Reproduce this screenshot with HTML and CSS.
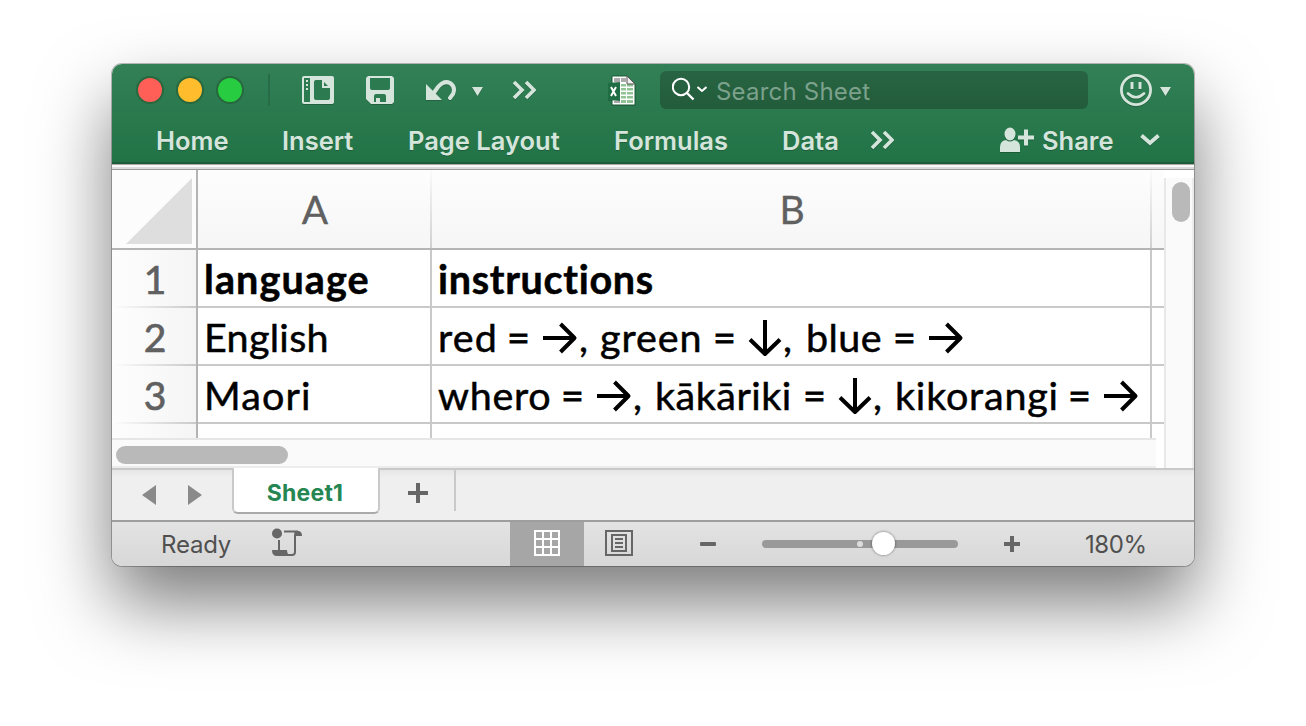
FILE: index.html
```html
<!DOCTYPE html>
<html lang="en">
<head>
<meta charset="utf-8">
<title>Sheet1</title>
<link rel="stylesheet" href="styles.css">
</head>
<body>
<svg width="0" height="0" class="defs">
  <defs>
    <symbol id="right" viewBox="0 0 36 36"><path d="M1 18H33M18.500 4L32.500 18L18.500 32" fill="none" stroke="#000" stroke-width="4" stroke-linejoin="round"/></symbol>
    <symbol id="down" viewBox="0 0 34 38"><path d="M17 1V35M2 20.500L17 35L32 20.500" fill="none" stroke="#000" stroke-width="4" stroke-linejoin="round"/></symbol>
    <symbol id="more" viewBox="0 0 24 20"><path d="M2 2L10 10L2 18M14 2L22 10L14 18" fill="none" stroke="#d5e5dc" stroke-width="3.600"/></symbol>
    <symbol id="tri" viewBox="0 0 11 9"><path d="M0 0H11L5.5 9Z" fill="#d5e5dc"/></symbol>
  </defs>
</svg>
<main class="window">
  <header class="ribbon">
    <div class="titlebar">
      <div class="lights"><i class="light close"></i><i class="light minimise"></i><i class="light grow"></i></div>
      <i class="sep"></i>
      <svg class="ic book" width="32" height="28" viewBox="0 0 32 28"><rect width="32" height="28" rx="2" fill="#d5e5dc"/><path d="M2 2H8V26H2ZM14 4H20V12H28V22Q28 24 26 24H14Q12 24 12 22V6Q12 4 14 4Z" fill="#2c7a4f"/><path d="M20 4L28 12H20Z" fill="#d5e5dc"/><path d="M22 6V10H26Z" fill="#2c7a4f"/><path d="M4 4h2v2H4zM4 8h2v2H4zM4 12h2v2H4z" fill="#d5e5dc"/></svg>
      <svg class="ic save" width="28" height="28" viewBox="0 0 28 28"><path d="M2 0H26L28 2V26L26 28H5L0 23V2Z" fill="#d5e5dc"/><path d="M4 2H24V12Q24 14 22 14H6Q4 14 4 12ZM10 18H18Q20 18 20 20V26H14V22H10V26H8V20Q8 18 10 18Z" fill="#2c7a4f"/></svg>
      <svg class="ic undo" width="32" height="22" viewBox="0 0 32 22"><path d="M1 4V20H17Z" fill="#d5e5dc"/><path d="M8 14L13 7Q19 0 25 3Q31 7 28 14L25 18" fill="none" stroke="#d5e5dc" stroke-width="4" stroke-linecap="round"/></svg>
      <svg class="ic tri1" width="11" height="9"><use href="#tri"/></svg>
      <svg class="ic more1" width="24" height="20"><use href="#more"/></svg>
      <svg class="ic excel" width="30" height="30" viewBox="0 0 30 30"><path d="M5 1H20L28 9V30H5Z" fill="#fff" stroke="#1d5d39" stroke-width="1"/><path d="M7 3H13V7H7ZM14 3H19V7H14ZM7 26H13V28H7Z" fill="#aaa"/><path d="M14 9H19V11.500H14ZM20 9H26V11.500H20ZM14 13H19V15.500H14ZM20 13H26V15.500H20ZM14 17H19V19.500H14ZM20 17H26V19.500H20ZM14 21H19V23.500H14ZM20 21H26V23.500H20ZM14 25H19V28H14ZM20 25H26V28H20Z" fill="#91c495"/><path d="M20 1V9H28Z" fill="#eee" stroke="#555" stroke-width="1"/><path d="M1 8L13 7V26L1 25Z" fill="#1f6e43"/><path d="M4 12L9 21M9 12L4 21" stroke="#fff" stroke-width="2"/></svg>
      <div class="search">
        <svg width="38" height="24" viewBox="0 0 38 24"><circle cx="9" cy="10" r="8.2" fill="none" stroke="#fff" stroke-width="2"/><path d="M15 16L21.5 22.5" stroke="#fff" stroke-width="2.4"/><path d="M25.500 10L30 14L34.500 10" fill="none" stroke="#fff" stroke-width="2"/></svg>
        <span>Search Sheet</span>
      </div>
      <svg class="ic smile" width="32" height="32" viewBox="0 0 32 32"><circle cx="16" cy="16" r="14.600" fill="none" stroke="#d5e5dc" stroke-width="2.800"/><path d="M12 8V15M20 8V15" stroke="#d5e5dc" stroke-width="3"/><path d="M8 19.500Q16 27 24 19.500" fill="none" stroke="#d5e5dc" stroke-width="2.600" stroke-linecap="round"/></svg>
      <svg class="ic tri2" width="11" height="9"><use href="#tri"/></svg>
    </div>
    <nav class="tabs">
      <span class="t-home">Home</span><span class="t-insert">Insert</span><span class="t-layout">Page Layout</span><span class="t-formulas">Formulas</span><span class="t-data">Data</span>
      <svg class="ic more2" width="24" height="20"><use href="#more"/></svg>
      <svg class="ic person" width="35" height="26" viewBox="0 0 35 26"><ellipse cx="10" cy="7" rx="5.500" ry="6.500" fill="#d5e5dc"/><path d="M0 25V20Q0 14 6 13Q10 16 14 13Q20 14 20 20V25Z" fill="#d5e5dc"/><path d="M18 10.500H34M26 2.500V18.500" stroke="#d5e5dc" stroke-width="4"/></svg>
      <span class="t-share">Share</span>
      <svg class="ic fold" width="20" height="12" viewBox="0 0 20 12"><path d="M1.500 1.500L10 9L18.500 1.500" fill="none" stroke="#d5e5dc" stroke-width="3.800"/></svg>
    </nav>
  </header>
  <div class="seam"></div>
  <section class="body">
    <div class="left">
      <div class="grid">
        <div class="corner"><svg width="66" height="66"><path d="M66 0V66H0Z" fill="#dedede"/></svg></div>
        <div class="col">A</div><div class="col">B</div><div class="col end"></div>
        <div class="num">1</div><div class="cell"><b class="w-lang">language</b></div><div class="cell"><b class="w-inst">instructions</b></div><div class="cell"></div>
        <div class="num">2</div><div class="cell"><span class="w-eng">English</span></div>
        <div class="cell"><span class="w-red">red</span><span class="w-eq">=</span><svg class="right" width="36" height="36"><use href="#right"/></svg><span class="w-comma">,</span><span class="w-green">green</span><span class="w-eq">=</span><svg class="down" width="34" height="38"><use href="#down"/></svg><span class="w-comma">,</span><span class="w-blue">blue</span><span class="w-eq">=</span><svg class="right" width="36" height="36"><use href="#right"/></svg></div><div class="cell"></div>
        <div class="num">3</div><div class="cell"><span class="w-maori">Maori</span></div>
        <div class="cell"><span class="w-whero">whero</span><span class="w-eq">=</span><svg class="right" width="36" height="36"><use href="#right"/></svg><span class="w-comma">,</span><span class="w-kak">kākāriki</span><span class="w-eq">=</span><svg class="down" width="34" height="38"><use href="#down"/></svg><span class="w-comma">,</span><span class="w-kik">kikorangi</span><span class="w-eq">=</span><svg class="right" width="36" height="36"><use href="#right"/></svg></div><div class="cell"></div>
        <div class="num last"></div><div class="cell last"></div><div class="cell last"></div><div class="cell last"></div>
      </div>
      <div class="hscroll"><i class="hthumb"></i></div>
    </div>
    <div class="vscroll"><i class="vthumb"></i></div>
  </section>
  <section class="sheets">
    <svg class="arrows" width="62" height="22" viewBox="0 0 62 22"><path d="M14 1V21L0 11ZM46 1V21L60 11Z" fill="#8a8a8a"/></svg>
    <div class="sheet"><span>Sheet1</span></div>
    <svg class="add" width="20" height="20"><path d="M0 10H20M10 0V20" stroke="#666" stroke-width="4"/></svg>
    <i class="sep2"></i>
  </section>
  <footer class="status">
    <span class="ready">Ready</span>
    <svg class="script" width="30" height="29" viewBox="0 0 30 29"><circle cx="5" cy="5.500" r="5" fill="#666"/><path d="M7 12V23" stroke="#666" stroke-width="2"/><path d="M12 3.500H26Q23 4 23 8V24Q23 27 20 27H16" fill="none" stroke="#666" stroke-width="2"/><path d="M22 3H26Q30 3 30 8H24Z" fill="#666"/><path d="M0 22H15Q15 27 19 28H5Q0 28 0 22Z" fill="#666"/></svg>
    <div class="view on"><svg width="26" height="26" viewBox="0 0 26 26"><path d="M1 1H25V25H1ZM9 1V25M17 1V25M1 9H25M1 17H25" fill="none" stroke="#fff" stroke-width="2"/></svg></div>
    <svg class="page" width="28" height="26" viewBox="0 0 28 26"><path d="M1 1H27V25H1ZM7 5H21V21H7ZM10 9H18M10 13H18M10 17H18" fill="none" stroke="#666" stroke-width="2"/></svg>
    <svg class="minus" width="16" height="4"><rect width="16" height="4" rx="1" fill="#666"/></svg>
    <div class="slider"><i class="tick"></i><i class="knob"></i></div>
    <svg class="plus" width="16" height="16"><path d="M0 8H16M8 0V16" stroke="#666" stroke-width="4"/></svg>
    <span class="pct">180%</span>
  </footer>
</main>
</body>
</html>
```
FILE: styles.css
```css
* { box-sizing: border-box; }
body { margin: 0; width: 1306px; height: 726px; padding: 64px 112px; background: #fff; overflow: hidden; font-family: Inter, sans-serif; }
.defs { position: absolute; }
i { display: block; }
svg { flex: none; display: block; }
.window { width: 1082px; height: 502px; border-radius: 10px; overflow: hidden; display: flex; flex-direction: column; box-shadow: 0 0 0 1px rgba(0,0,0,.25), 0 37px 72px rgba(0,0,0,.52); background: #fff; }

.ribbon { height: 100px; background: linear-gradient(#338056, #217346); border-bottom: 2px solid #1d5c38; color: #d5e5dc; flex: none; }
.ic { filter: drop-shadow(0 1px 0 rgba(0,0,0,.2)); }
.titlebar { height: 52px; display: flex; align-items: center; padding-left: 26px; }
.lights { display: flex; gap: 16px; }
.light { width: 24px; height: 24px; border-radius: 50%; box-shadow: 0 0 0 2px #28683f; }
.close { background: #ff5f57; }
.minimise { background: #ffbd2e; }
.grow { background: #28cc40; }
.sep { width: 2px; height: 32px; margin-left: 26px; background: #286c47; }
.book { margin-left: 32px; }
.save { margin-left: 32px; }
.undo { margin: 2px 0 0 31px; }
.tri1 { margin-left: 15px; margin-top: 2px; }
.more1 { margin-left: 29px; }
.excel { margin-left: 71px; }
.search { width: 428px; height: 38px; margin-left: 23px; border-radius: 6px; background: linear-gradient(#286443, #225c3a); display: flex; align-items: center; padding-left: 12px; color: #7ca18c; font-size: 24px; letter-spacing: .2px; }
.search span { margin-left: 6px; margin-top: 2px; }
.search svg { margin-top: -2px; }
.smile { margin-left: 32px; }
.tri2 { margin-left: 8px; margin-top: 2px; }

.tabs { height: 46px; display: flex; align-items: center; padding: 2px 0 0 44px; font-size: 25.5px; font-weight: 600; white-space: nowrap; text-shadow: 0 1px 0 rgba(0,0,0,.2); }
.tabs span { padding-top: 1px; }
.t-home, .t-insert { width: 126px; }
.t-layout { width: 206px; }
.t-formulas { width: 168px; }
.t-data { width: 88px; }
.person { margin-left: 106px; margin-top: -1px; }
.t-share { width: 105px; padding-left: 7px; margin-top: -1px; }

.seam { height: 6px; flex: none; background: linear-gradient(#a8a8a8 0 1px, #f8f8f8 1px 3px, #dcdcdc 3px 5px, #999 5px); }
.body { height: 298px; flex: none; display: flex; }
.left { width: 1052px; }
.grid { height: 268px; display: grid; grid-template-columns: 86px 234px 720px 12px; grid-template-rows: 80px 58px 58px 58px 14px; }
.corner { border-right: 2px solid #b4b4b4; border-bottom: 2px solid #b4b4b4; padding: 8px 0 0 14px; background: #fcfcfc; }
.col { font: 39px Lato, sans-serif; color: #606060; display: flex; align-items: center; justify-content: center; border-bottom: 2px solid #b4b4b4; background: linear-gradient(#fafafa, #d0d0d0) right / 2px 100% no-repeat, linear-gradient(#fdfdfd, #f6f6f6); -webkit-text-stroke: .3px; }
.col.end { background: linear-gradient(#fdfdfd, #f6f6f6); }
.num { font: 39px Lato, sans-serif; color: #606060; display: flex; align-items: center; justify-content: center; border-right: 2px solid #b4b4b4; background: linear-gradient(90deg, #fdfdfd, #c9c9c9) bottom / 100% 2px no-repeat, linear-gradient(90deg, #fdfdfd, #f5f5f5); padding-left: 2px; -webkit-text-stroke: .7px; }
.cell { font: 39.5px Lato, sans-serif; letter-spacing: .3px; color: #000; display: flex; align-items: center; border-right: 2px solid #c9c9c9; border-bottom: 2px solid #c9c9c9; padding: 0 0 0 6px; white-space: nowrap; overflow: hidden; -webkit-text-stroke: .5px; }
.cell:nth-child(4n) { border-right: 0; }
.last { border-bottom: 0; }
.num.last { background: linear-gradient(90deg, #fdfdfd, #f5f5f5); }
.w-lang { letter-spacing: 1.1px; padding-top: 1px; }
.w-inst { letter-spacing: .7px; padding-top: 1px; }
.w-maori { letter-spacing: 1.1px; }
.w-red { width: 69px; letter-spacing: 1.2px; }
.w-eq { width: 35px; -webkit-text-stroke: .8px; }
.right { margin-top: 3px; }
.down { margin-top: 3px; }
.w-comma { width: 22px; padding-left: 1px; }
.w-green { width: 113px; letter-spacing: .9px; }
.w-blue { width: 89px; padding-left: 2px; letter-spacing: .4px; }
.w-whero { width: 123px; letter-spacing: .7px; }
.w-kak { width: 149px; padding-left: 1px; letter-spacing: .5px; }
.w-kik { width: 174px; padding-left: 1px; letter-spacing: .8px; }

.hscroll { width: 1044px; height: 30px; background: #fafafa; border-top: 2px solid #e6e6e6; border-bottom: 2px solid #ececec; padding: 6px 4px; }
.hthumb { width: 172px; height: 18px; border-radius: 9px; background: #b9b9b9; }
.vscroll { width: 30px; margin-top: 8px; background: #fafafa; border-left: 2px solid #e8e8e8; border-right: 2px solid #ececec; padding: 4px 6px; }
.vthumb { width: 18px; height: 40px; border-radius: 9px; background: #b9b9b9; }

.sheets { height: 52px; flex: none; background: linear-gradient(#e6e6e6, #efefef 8px); border-top: 2px solid #c9c9c9; display: flex; align-items: flex-start; }
.arrows { margin: 14px 0 0 30px; }
.sheet { width: 148px; height: 46px; margin: -2px 0 0 28px; background: #fff; border: 2px solid #c9c9c9; border-top: 0; border-bottom-color: #aaa; border-radius: 0 0 6px 6px; display: flex; align-items: center; justify-content: center; padding: 6px 2px 0 0; color: #258651; font-size: 23px; font-weight: 700; letter-spacing: .2px; }
.add { margin: 13px 0 0 28px; }
.sep2 { width: 2px; height: 41px; margin-left: 26px; background: #c9c9c9; }

.status { height: 46px; background: linear-gradient(#e3e3e3, #d7d7d7); border-top: 2px solid #9e9e9e; display: flex; align-items: center; color: #505050; font-size: 24px; }
.ready { width: 111px; margin-left: 49px; padding-top: 1px; letter-spacing: -.2px; flex: none; }
.script { margin-right: 208px; margin-top: -3px; }
.view { width: 74px; height: 44px; display: flex; align-items: center; justify-content: center; background: #a6a6a6; flex: none; }
.view svg, .page { margin-top: -2px; }
.page { margin-left: 21px; }
.minus { margin-left: 67px; margin-top: -1px; }
.slider { width: 196px; height: 8px; margin-left: 46px; border-radius: 4px; background: #999; display: flex; align-items: center; }
.tick { width: 6px; height: 6px; margin-left: 95px; border-radius: 50%; background: #ddd; }
.knob { width: 23px; height: 23px; margin: -2px 0 0 9px; border-radius: 50%; background: #fff; box-shadow: 0 0 2px 1px rgba(0,0,0,.25); }
.plus { margin-left: 46px; margin-top: -1px; }
.pct { margin-left: 65px; padding-top: 1px; letter-spacing: -.4px; }
```
